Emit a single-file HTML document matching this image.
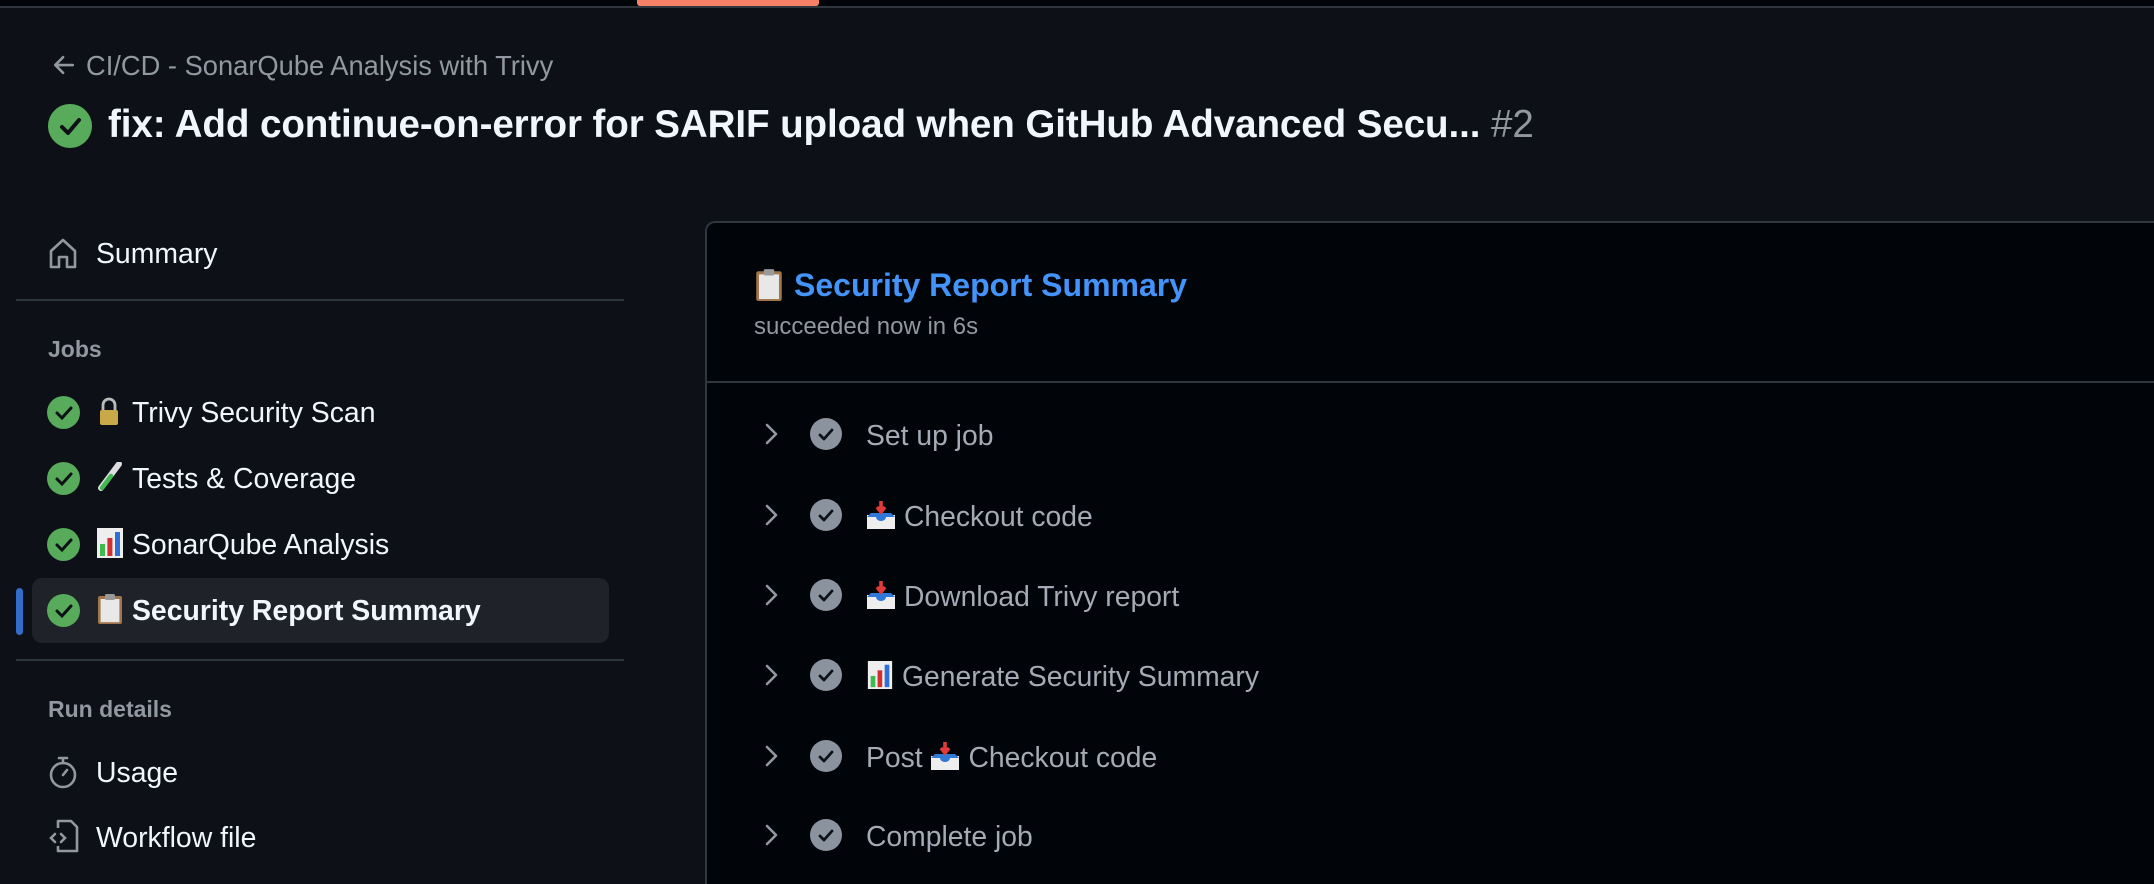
<!DOCTYPE html>
<html style="width:2154px;height:884px;overflow:hidden"><head><meta charset="utf-8"><style>
*{margin:0;padding:0;box-sizing:border-box}
body{width:2154px;height:884px;overflow:hidden;background:#0d1117;font-family:"Liberation Sans",sans-serif;color:#f0f6fc;position:relative}
.top{position:absolute;left:0;top:0;width:2154px;height:8px;background:#010409;border-bottom:2px solid #30363d}
.orange{position:absolute;left:637px;top:0;width:182px;height:6px;background:#f78166;border-radius:0 0 3px 3px}
.abs{position:absolute;white-space:nowrap}
.back{left:50px;top:50px;font-size:27.3px;color:#9198a1;line-height:32px}
.title{left:108px;top:102px;font-size:38.6px;font-weight:bold;line-height:46px;letter-spacing:-0.1px}
.title span{color:#9198a1;font-weight:normal}
.gc{position:absolute;border-radius:50%;background:#57ab5a}
.side{font-size:28.4px;line-height:32px}
.hr{position:absolute;height:2px;background:#30363d}
.lab{font-size:23px;font-weight:bold;color:#9198a1}
.panel{position:absolute;left:705px;top:221px;width:1449px;height:663px;background:#010409;border:2px solid #30363d;border-right:none;border-bottom:none;border-radius:10px 0 0 0}
.step{font-size:28.3px;color:#a4abb4;line-height:32px}
.ic{vertical-align:-3px;margin-right:8px}
</style></head><body>
<div class="top"></div><div class="orange"></div>

<div class="abs back"><svg width="28" height="28" viewBox="0 0 16 16" style="vertical-align:-4px;margin-right:8px"><path d="M13 8H3.5M7.5 3.5L3 8l4.5 4.5" stroke="#9198a1" stroke-width="1.5" fill="none" stroke-linecap="round" stroke-linejoin="round"/></svg>CI/CD - SonarQube Analysis with Trivy</div>

<div class="gc" style="left:48px;top:104px;width:44px;height:44px"><svg width="44" height="44" viewBox="0 0 44 44"><path d="M14 23l6 6 11-13" stroke="#0d1117" stroke-width="4" fill="none" stroke-linecap="round" stroke-linejoin="round"/></svg></div>
<div class="abs title">fix: Add continue-on-error for SARIF upload when GitHub Advanced Secu... <span>#2</span></div>

<svg class="abs" style="left:47px;top:236px" width="32" height="34" viewBox="0 0 16 17"><path d="M2 7.5L8 2l6 5.5V15.5H10V10.5H6V15.5H2Z" stroke="#9198a1" stroke-width="1.3" fill="none" stroke-linejoin="round"/></svg>
<div class="abs side" style="left:96px;top:238px">Summary</div>
<div class="hr" style="left:16px;top:299px;width:608px"></div>
<div class="abs lab" style="left:48px;top:336px">Jobs</div>

<div style="position:absolute;left:32px;top:578px;width:577px;height:65px;background:#1f2329;border-radius:10px"></div>
<div style="position:absolute;left:16px;top:588px;width:7px;height:47px;background:#316dca;border-radius:4px"></div>

<div class="gc" style="left:47px;top:396px;width:33px;height:33px"><svg width="33" height="33"><path d="M10 17l5 5 9-10" stroke="#0d1117" stroke-width="3" fill="none" stroke-linecap="round"/></svg></div>
<svg class="abs" style="left:97px;top:396px" width="24" height="30" viewBox="0 0 12 15"><path d="M3 7V4.5a3 3 0 0 1 6 0V7" stroke="#bbb" stroke-width="1.4" fill="none"/><rect x="1.5" y="7" width="9" height="7.5" rx="1" fill="#c9a84a"/></svg>
<div class="abs side" style="left:132px;top:397px">Trivy Security Scan</div>

<div class="gc" style="left:47px;top:462px;width:33px;height:33px"><svg width="33" height="33"><path d="M10 17l5 5 9-10" stroke="#0d1117" stroke-width="3" fill="none" stroke-linecap="round"/></svg></div>
<svg class="abs" style="left:97px;top:462px" width="26" height="30" viewBox="0 0 13 15"><path d="M11 1L2 13" stroke="#ddd" stroke-width="3" stroke-linecap="round"/><path d="M7 7L2.5 13" stroke="#3fb950" stroke-width="2.2" stroke-linecap="round"/></svg>
<div class="abs side" style="left:132px;top:463px">Tests &amp; Coverage</div>

<div class="gc" style="left:47px;top:528px;width:33px;height:33px"><svg width="33" height="33"><path d="M10 17l5 5 9-10" stroke="#0d1117" stroke-width="3" fill="none" stroke-linecap="round"/></svg></div>
<svg class="abs" style="left:97px;top:528px" width="26" height="30" viewBox="0 0 13 15"><rect x="0" y="0" width="13" height="15" fill="#eee"/><rect x="1.5" y="8" width="2.5" height="6" fill="#3fb950"/><rect x="5.2" y="5" width="2.5" height="9" fill="#d03030"/><rect x="9" y="2" width="2.5" height="12" fill="#2f6fd8"/></svg>
<div class="abs side" style="left:132px;top:529px">SonarQube Analysis</div>

<div class="gc" style="left:47px;top:594px;width:33px;height:33px"><svg width="33" height="33"><path d="M10 17l5 5 9-10" stroke="#0d1117" stroke-width="3" fill="none" stroke-linecap="round"/></svg></div>
<svg class="abs" style="left:97px;top:593px" width="26" height="32" viewBox="0 0 13 16"><rect x="0.5" y="1.5" width="12" height="14" rx="1" fill="#a0764a"/><rect x="1.8" y="3" width="9.4" height="11.6" fill="#e8e8e8"/><rect x="4" y="0.5" width="5" height="3" rx="0.8" fill="#999"/></svg>
<div class="abs side" style="left:132px;top:595px;font-weight:bold">Security Report Summary</div>

<div class="hr" style="left:16px;top:659px;width:608px"></div>
<div class="abs lab" style="left:48px;top:696px">Run details</div>
<svg class="abs" style="left:48px;top:755px" width="30" height="34" viewBox="0 0 15 17"><circle cx="7.5" cy="10" r="6" stroke="#9198a1" stroke-width="1.3" fill="none"/><path d="M5.5 1.5h4M7.5 1.5V4M7.5 10l2-2.5" stroke="#9198a1" stroke-width="1.3" fill="none" stroke-linecap="round"/></svg>
<div class="abs side" style="left:96px;top:757px">Usage</div>
<svg class="abs" style="left:48px;top:818px" width="32" height="36" viewBox="0 0 16 18"><path d="M5 5V1.5h6.5L14.5 4.5V16.5H5V14" stroke="#9198a1" stroke-width="1.3" fill="none" stroke-linejoin="round"/><path d="M3.5 8L1.5 10l2 2M6.5 8l2 2-2 2" stroke="#9198a1" stroke-width="1.3" fill="none" stroke-linecap="round"/></svg>
<div class="abs side" style="left:96px;top:822px">Workflow file</div>

<div class="panel"></div>
<svg class="abs" style="left:754px;top:268px" width="30" height="34" viewBox="0 0 13 16"><rect x="0.5" y="1.5" width="12" height="14" rx="1" fill="#a0764a"/><rect x="1.8" y="3" width="9.4" height="11.6" fill="#e8e8e8"/><rect x="4" y="0.5" width="5" height="3" rx="0.8" fill="#999"/></svg>
<div class="abs" style="left:794px;top:266px;font-size:32px;font-weight:bold;color:#4493f8;line-height:38px">Security Report Summary</div>
<div class="abs" style="left:754px;top:313px;font-size:24px;color:#9198a1;line-height:28px">succeeded now in 6s</div>
<div class="hr" style="left:707px;top:381px;width:1447px"></div>

<svg class="abs" style="left:0;top:0" width="2154" height="884">
<g stroke="#9198a1" stroke-width="2.6" fill="none" stroke-linecap="round" stroke-linejoin="round">
<path d="M767 425l9 9-9 9"/><path d="M767 506l9 9-9 9"/><path d="M767 586l9 9-9 9"/><path d="M767 666l9 9-9 9"/><path d="M767 747l9 9-9 9"/><path d="M767 826l9 9-9 9"/>
</g>
<g fill="#8b949e"><circle cx="826" cy="434" r="16"/><circle cx="826" cy="515" r="16"/><circle cx="826" cy="595" r="16"/><circle cx="826" cy="675" r="16"/><circle cx="826" cy="756" r="16"/><circle cx="826" cy="835" r="16"/></g>
<g stroke="#0d1117" stroke-width="2.8" fill="none" stroke-linecap="round" stroke-linejoin="round">
<path d="M820 435l4 4 8-9"/><path d="M820 516l4 4 8-9"/><path d="M820 596l4 4 8-9"/><path d="M820 676l4 4 8-9"/><path d="M820 757l4 4 8-9"/><path d="M820 836l4 4 8-9"/>
</g>
</svg>
<div class="abs step" style="left:866px;top:419px">Set up job</div>
<div class="abs step" style="left:866px;top:500px"><svg class="ic" width="30" height="28" viewBox="0 0 14 14"><path d="M0 7h14v7H0z" fill="#eee"/><path d="M2 6h10l2 2H9.5a2.5 2 0 0 1-5 0H0z" fill="#2f78d8"/><path d="M7 0v4M5 3l2 2.5L9 3" stroke="#e03a3a" stroke-width="1.8" fill="none"/></svg>Checkout code</div>
<div class="abs step" style="left:866px;top:580px"><svg class="ic" width="30" height="28" viewBox="0 0 14 14"><path d="M0 7h14v7H0z" fill="#eee"/><path d="M2 6h10l2 2H9.5a2.5 2 0 0 1-5 0H0z" fill="#2f78d8"/><path d="M7 0v4M5 3l2 2.5L9 3" stroke="#e03a3a" stroke-width="1.8" fill="none"/></svg>Download Trivy report</div>
<div class="abs step" style="left:866px;top:660px"><svg class="ic" width="28" height="28" viewBox="0 0 13 15"><rect x="0" y="0" width="13" height="15" fill="#eee"/><rect x="1.5" y="8" width="2.5" height="6" fill="#3fb950"/><rect x="5.2" y="5" width="2.5" height="9" fill="#d03030"/><rect x="9" y="2" width="2.5" height="12" fill="#2f6fd8"/></svg>Generate Security Summary</div>
<div class="abs step" style="left:866px;top:741px">Post <svg class="ic" width="30" height="28" viewBox="0 0 14 14"><path d="M0 7h14v7H0z" fill="#eee"/><path d="M2 6h10l2 2H9.5a2.5 2 0 0 1-5 0H0z" fill="#2f78d8"/><path d="M7 0v4M5 3l2 2.5L9 3" stroke="#e03a3a" stroke-width="1.8" fill="none"/></svg>Checkout code</div>
<div class="abs step" style="left:866px;top:820px">Complete job</div>
</body></html>
